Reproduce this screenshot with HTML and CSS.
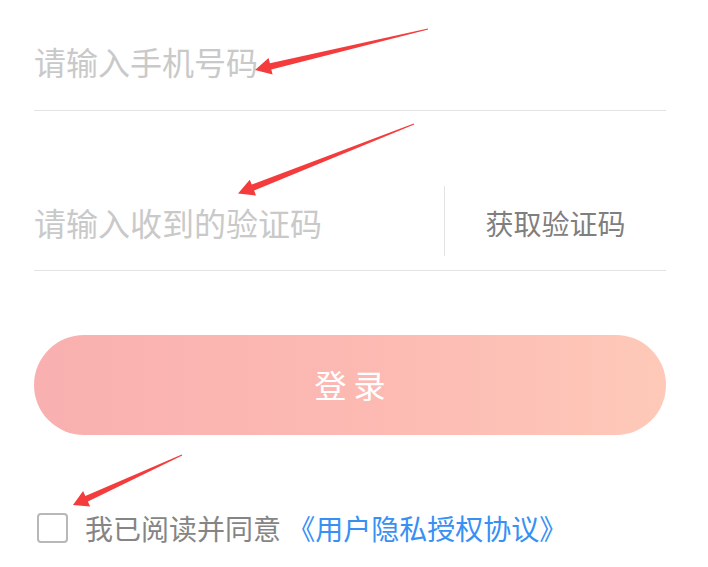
FILE: index.html
```html
<!DOCTYPE html>
<html lang="zh-CN">
<head>
    <meta charset="UTF-8">
    <meta name="viewport" content="width=device-width, initial-scale=1.0">
    <title>登录</title>
    <link rel="stylesheet" href="styles.css">
</head>
<body>
    <div class="login">
        <div class="campo campo-telefone">
            <input type="tel" class="entrada" placeholder="请输入手机号码">
        </div>

        <div class="campo campo-codigo">
            <input type="text" class="entrada" placeholder="请输入收到的验证码">
            <div class="obter-codigo">获取验证码</div>
        </div>

        <button class="botao-login">登 录</button>

        <label class="acordo">
            <span class="caixa"></span>
            <span class="acordo-texto">我已阅读并同意 <a class="acordo-link">《用户隐私授权协议》</a></span>
        </label>
    </div>

    <!-- setas de anotação por cima da tela -->
    <svg class="setas" width="708" height="567" viewBox="0 0 708 567">
        <polygon points="428.1,29.5 271.3,69.4 272.6,74.6 255,70 268.6,58 269.9,63.2 427.9,28.5"/>
        <polygon points="414.2,124.5 254.1,190.6 256,195.5 238,193.5 249.8,179.7 251.7,184.6 413.8,123.5"/>
        <polygon points="182.2,455.5 87.9,501.4 90.1,506.4 73,505 83.1,491 85.3,496 181.8,454.5"/>
    </svg>
</body>
</html>
```

FILE: styles.css
```css
body {
    font-family: "Noto Sans CJK SC", "Noto Sans", sans-serif;
    background-color: white;
    margin: 0;
    position: relative;
    width: 708px;
    height: 567px;
    overflow: hidden;
}

.login {
    width: 632px;
    padding-left: 34px;
    display: flex;
    flex-direction: column;
}

.campo {
    display: flex;
    align-items: center;
    border-bottom: 1px solid #e3e3e3;
    box-sizing: border-box;
}

.campo-telefone {
    height: 111px;
    padding-top: 12px;
}

.campo-codigo {
    height: 160px;
    padding-top: 62px;
}

.entrada {
    flex: 1;
    min-width: 0;
    border: none;
    outline: none;
    padding: 0;
    font-family: inherit;
    font-size: 32px;
    color: #333;
    background: transparent;
}

.entrada::placeholder {
    color: #c9c9c9;
}

.obter-codigo {
    width: 222px;
    height: 70px;
    margin-bottom: 2px;
    border-left: 1px solid #e3e3e3;
    display: flex;
    align-items: center;
    justify-content: center;
    font-size: 28px;
    color: #7f7f7f;
    padding-top: 4px;
    box-sizing: border-box;
}

.botao-login {
    margin-top: 64px;
    height: 100px;
    padding-bottom: 4px;
    border: none;
    border-radius: 50px;
    background: linear-gradient(to right, #f9b0b0, #fcbab3 55%, #fec9b8);
    color: white;
    font-family: inherit;
    font-size: 32px;
}

.acordo {
    margin-top: 73px;
    display: flex;
    align-items: center;
    gap: 17px;
    padding-left: 3px;
}

.caixa {
    width: 27px;
    height: 26px;
    border: 2px solid #b8b8b8;
    border-radius: 4px;
}

.acordo-texto {
    font-size: 28px;
    color: #858585;
}

.acordo-link {
    color: #3790f4;
}

.setas {
    position: absolute;
    left: 0;
    top: 0;
    pointer-events: none;
}

.setas polygon {
    fill: #f43c3c;
}
```
